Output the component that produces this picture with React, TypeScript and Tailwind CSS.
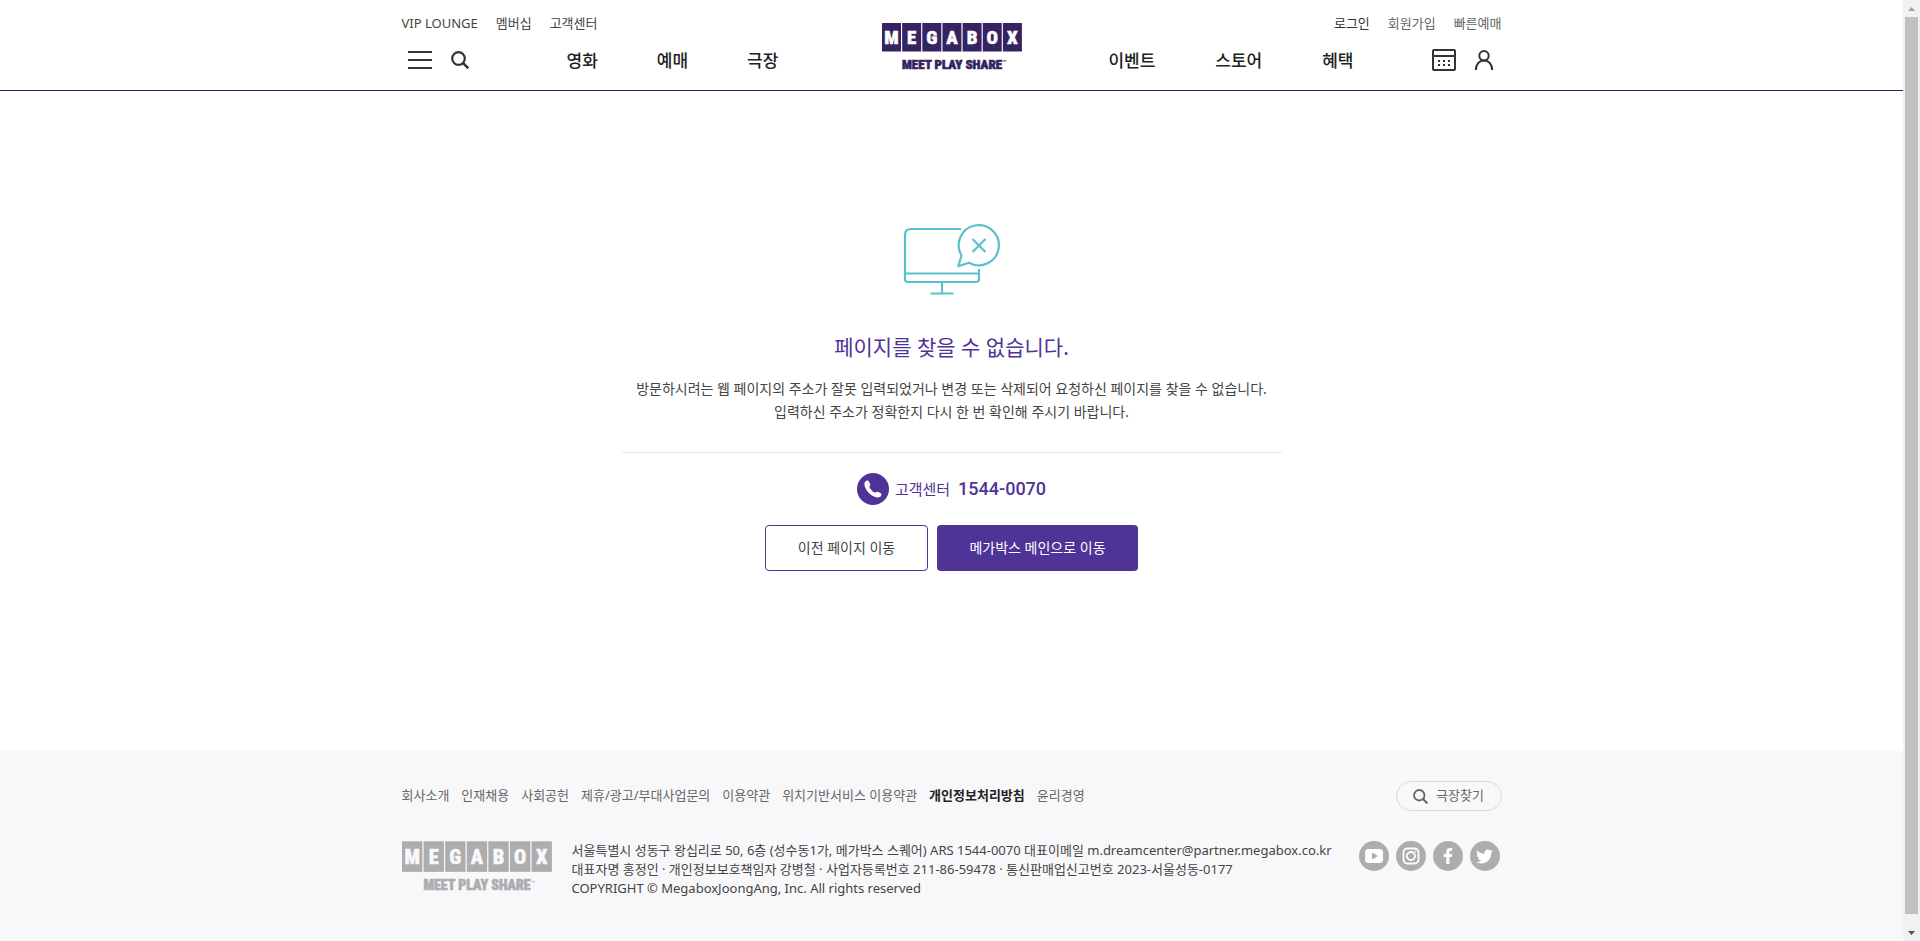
import React from "react";
import { FaFacebookF, FaTwitter } from "react-icons/fa";

const utilLeft = ["VIP LOUNGE", "멤버십", "고객센터"];
const footerLinks = [
  "회사소개",
  "인재채용",
  "사회공헌",
  "제휴/광고/부대사업문의",
  "이용약관",
  "위치기반서비스 이용약관",
  "개인정보처리방침",
  "윤리경영",
];

function Logo({ color, letter, className }: { color: string; letter: string; className: string }) {
  return (
    <svg viewBox="0 0 140 47" className={className} role="img" aria-label="MEGABOX MEET PLAY SHARE">
      {"MEGABOX".split("").map((c, i) => (
        <g key={i}>
          <rect x={i * 20.15} y="0" width="19" height="28.500" fill={color} />
          <text
            x={i * 20.15 + 9.5}
            y="21"
            textAnchor="middle"
            fontFamily="'Roboto Condensed', Roboto, sans-serif"
            fontWeight="900"
            fontSize="19"
            fill={letter}
            stroke={letter}
            strokeWidth="0.4"
          >
            {c}
          </text>
        </g>
      ))}
      <text
        x="20"
        y="45.500"
        fontFamily="'Roboto Condensed', Roboto, sans-serif"
        fontWeight="900"
        fontSize="13"
        fill={color}
        stroke={color}
        strokeWidth="0.6"
      >
        MEET PLAY SHARE
        <tspan fontFamily="'DejaVu Sans', sans-serif" fontSize="5" dy="-5" strokeWidth="0">™</tspan>
      </text>
    </svg>
  );
}

function SearchIcon({ className }: { className: string }) {
  return (
    <svg viewBox="0 0 18 18" className={className} fill="none" stroke="currentColor" strokeWidth="2.2" aria-hidden="true">
      <circle cx="7.5" cy="7.5" r="6.3" />
      <path d="M12 12l5.3 5.3" strokeWidth="2.5" />
    </svg>
  );
}

function ErrorIcon() {
  return (
    <svg viewBox="0 0 98 72" className="h-[72px] w-[98px]" fill="none" stroke="#5bc0cb" strokeWidth="2.2" aria-hidden="true">
      <path d="M58 5H8Q2 5 2 11V55Q2 58 5 58H73Q76 58 76 55V45" />
      <path d="M2 49.500H76M39 58V69.500M27.500 69.500H50.500" />
      <path d="M55.300 42.300L58.500 31.500A20.100 20.100 0 1 1 66 38.800L55.300 42.300Z" strokeLinejoin="round" />
      <path d="M69.500 15L82.500 28M82.500 15L69.500 28" />
    </svg>
  );
}

function Header() {
  return (
    <header className="border-b border-[#352461] bg-white">
      <div className="mx-auto flex h-[90px] max-w-[1100px]">
        <div className="flex flex-1 flex-col">
          <ul className="flex h-12 items-center gap-[18px] text-[13px] text-[#444]">
            {utilLeft.map((t) => (
              <li key={t}><a href="#">{t}</a></li>
            ))}
          </ul>
          <div className="flex h-6 items-center pl-1.5">
            <button aria-label="전체메뉴" className="flex w-6 flex-col gap-1.5">
              <span className="h-0.5 w-full bg-[#333]" />
              <span className="h-0.5 w-full bg-[#333]" />
              <span className="h-0.5 w-full bg-[#333]" />
            </button>
            <button aria-label="검색" className="ml-[19px] text-[#333]"><SearchIcon className="size-[18px]" /></button>
            <nav className="ml-[98px] flex gap-[59px] pt-0.5 text-[17px] font-medium text-[#222]">
              <a href="#">영화</a>
              <a href="#">예매</a>
              <a href="#">극장</a>
            </nav>
          </div>
        </div>
        <h1 className="pt-[23px]">
          <a href="#"><Logo color="#352461" letter="#fff" className="h-[47px] w-[140px]" /></a>
        </h1>
        <div className="flex flex-1 flex-col items-end">
          <ul className="flex h-12 items-center gap-[18px] text-[13px] text-[#666]">
            <li><a href="#" className="text-[#333]">로그인</a></li>
            <li><a href="#">회원가입</a></li>
            <li><a href="#">빠른예매</a></li>
          </ul>
          <div className="flex h-6 items-center pr-2">
            <nav className="mr-[78px] flex gap-[60px] pt-0.5 text-[17px] font-medium text-[#222]">
              <a href="#">이벤트</a>
              <a href="#">스토어</a>
              <a href="#">혜택</a>
            </nav>
            <a href="#" aria-label="상영시간표" className="mr-[18px]">
              <svg viewBox="0 0 24 22" className="h-[22px] w-6" fill="none" stroke="#333" strokeWidth="2">
                <rect x="1" y="1" width="22" height="20" rx="1" />
                <path d="M1 7h22" />
                <path d="M6 12h2m3 0h2m3 0h2M6 16h2m3 0h2m3 0h2" />
              </svg>
            </a>
            <a href="#" aria-label="나의 메가박스">
              <svg viewBox="0 0 20 20" className="size-5" fill="none" stroke="#333" strokeWidth="2">
                <circle cx="10" cy="5.700" r="4.700" />
                <path d="M1.800 20c0-5.500 3.400-9.500 8.200-9.500s8.200 4 8.200 9.500" />
              </svg>
            </a>
          </div>
        </div>
      </div>
    </header>
  );
}

function Main() {
  return (
    <main className="flex flex-1 flex-col items-center pt-[133px] pb-[180px]">
      <ErrorIcon />
      <h2 className="mt-[31px] text-[21px] leading-10 text-[#503396]">페이지를 찾을 수 없습니다.</h2>
      <p className="mt-2.5 w-[660px] border-b border-[#e8e8e8] pb-[29px] text-center text-sm leading-[23px] text-[#444]">
        방문하시려는 웹 페이지의 주소가 잘못 입력되었거나 변경 또는 삭제되어 요청하신 페이지를 찾을 수 없습니다.
        <br />
        입력하신 주소가 정확한지 다시 한 번 확인해 주시기 바랍니다.
      </p>
      <div className="mt-5 flex h-8 items-center text-[#503396]">
        <span className="flex size-8 items-center justify-center rounded-full bg-[#503396]">
          <svg viewBox="0 0 18 18" className="size-[18px]" fill="#fff" aria-hidden="true">
            <path d="M1.300 1.500C2.400.4 4 .2 4.700 1.200L6.200 4.200C6.700 5.300 5.400 6 5.400 7C6.300 9.500 8.500 11.600 11 12.600C12 12.700 12.700 11.300 13.800 11.800L16.800 13.300C17.800 14 17.600 15.500 16.500 16.500C15 18 12.500 17.800 10 16.600C6 14.700 3.200 11.700 1.400 8C.2 5.500 0 2.900 1.300 1.500Z" />
          </svg>
        </span>
        <span className="ml-1.5 text-[15px]">고객센터</span>
        <strong className="ml-2 font-[Roboto,sans-serif] text-lg font-medium">1544-0070</strong>
      </div>
      <div className="mt-5 flex gap-[9px] text-sm">
        <button className="h-[46px] w-[163px] rounded border border-[#503396] bg-white text-[#444]">이전 페이지 이동</button>
        <button className="h-[46px] w-[201px] rounded bg-[#503396] text-white">메가박스 메인으로 이동</button>
      </div>
    </main>
  );
}

const socialClass = "flex size-[30px] items-center justify-center rounded-full bg-[#adadaf] text-white";

function Footer() {
  return (
    <footer className="bg-[#f8f8fa] pt-[30px] pb-[43px]">
      <div className="mx-auto max-w-[1100px]">
        <div className="flex items-center justify-between">
          <ul className="flex gap-3 pb-0.5 text-[13px] leading-5 text-[#666]">
            {footerLinks.map((t) => (
              <li key={t}>
                <a href="#" className={t === "개인정보처리방침" ? "font-bold text-[#222]" : ""}>{t}</a>
              </li>
            ))}
          </ul>
          <button className="flex h-[30px] w-[106px] items-center justify-center gap-2 rounded-full border border-[#d8d9db] text-[13px] text-[#666]">
            <SearchIcon className="size-[15px]" />
            극장찾기
          </button>
        </div>
        <div className="mt-[30px] flex items-start">
          <Logo color="#adadaf" letter="#f8f8fa" className="h-[51px] w-[150px]" />
          <address className="ml-5 flex-1 text-[13px] leading-[19px] text-[#444] not-italic">
            <p>서울특별시 성동구 왕십리로 50, 6층 (성수동1가, 메가박스 스퀘어) ARS 1544-0070 대표이메일 m.dreamcenter@partner.megabox.co.kr</p>
            <p>대표자명 홍정인 · 개인정보보호책임자 강병철 · 사업자등록번호 211-86-59478 · 통신판매업신고번호 2023-서울성동-0177</p>
            <p>COPYRIGHT © MegaboxJoongAng, Inc. All rights reserved</p>
          </address>
          <div className="flex gap-[7px] pr-0.5">
            <a href="#" aria-label="유튜브" className={socialClass}>
              <svg viewBox="0 0 18 14" className="h-3.5 w-[18px]" aria-hidden="true">
                <rect width="18" height="14" rx="3.500" fill="#fff" />
                <path d="M7 3.500L13 7L7 10.500Z" fill="#adadaf" />
              </svg>
            </a>
            <a href="#" aria-label="인스타그램" className={socialClass}>
              <svg viewBox="0 0 18 18" className="size-[18px]" fill="none" stroke="currentColor" strokeWidth="1.800" aria-hidden="true">
                <rect x="1.500" y="1.500" width="15" height="15" rx="4" />
                <circle cx="9" cy="9" r="4" />
                <circle cx="13.500" cy="4.500" r="0.500" strokeWidth="1" />
              </svg>
            </a>
            <a href="#" aria-label="페이스북" className={socialClass}><FaFacebookF size={16} /></a>
            <a href="#" aria-label="트위터" className={socialClass}><FaTwitter size={17} /></a>
          </div>
        </div>
      </div>
    </footer>
  );
}

export default function App() {
  return (
    <div className="flex min-h-screen bg-white font-['Noto_Sans','Noto_Sans_CJK_KR',sans-serif]">
      <div className="flex min-w-0 flex-1 flex-col">
        <Header />
        <Main />
        <Footer />
      </div>
      <div aria-hidden="true" className="flex w-[17px] flex-col items-center justify-between bg-[#f1f1f1]">
        <span className="flex h-[17px] items-center">
          <svg viewBox="0 0 7 4" className="h-1 w-[7px]" fill="#a3a3a3"><path d="M3.500 0L7 4H0Z" /></svg>
        </span>
        <span className="mb-[10px] w-[13px] flex-1 bg-[#c1c1c1]" />
        <span className="flex h-[17px] items-center">
          <svg viewBox="0 0 7 4" className="h-1 w-[7px]" fill="#505050"><path d="M3.500 4L7 0H0Z" /></svg>
        </span>
      </div>
    </div>
  );
}
